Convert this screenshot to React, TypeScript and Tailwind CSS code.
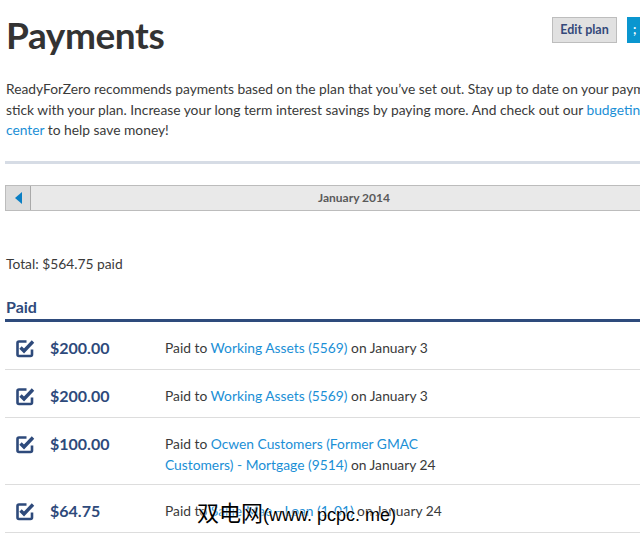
import React from 'react';

type Payment = {
  amount: string;
  parts: { text: string; link?: boolean }[];
};

const payments: Payment[] = [
  {
    amount: '$200.00',
    parts: [
      { text: 'Paid to ' },
      { text: 'Working Assets (5569)', link: true },
      { text: ' on January 3' },
    ],
  },
  {
    amount: '$200.00',
    parts: [
      { text: 'Paid to ' },
      { text: 'Working Assets (5569)', link: true },
      { text: ' on January 3' },
    ],
  },
  {
    amount: '$100.00',
    parts: [
      { text: 'Paid to ' },
      { text: 'Ocwen Customers (Former GMAC Customers) - Mortgage (9514)', link: true },
      { text: ' on January 24' },
    ],
  },
  {
    amount: '$64.75',
    parts: [
      { text: 'Paid to ' },
      { text: 'Sallie Mae - Loan (1-01)', link: true },
      { text: ' on January 24' },
    ],
  },
];

const CheckSquare = () => (
  <svg width="20" height="20" viewBox="0 0 20 20" className="shrink-0">
    {/* box outline, open at the top right where the tick leaves it */}
    <path
      d="M11.5 3.5 H4 Q2.5 3.5 2.5 5 V16.5 Q2.5 18 4 18 H15.5 Q17 18 17 16.5 V11.5"
      fill="none"
      stroke="#2e4a7b"
      strokeWidth="2.6"
    />
    <path d="M5.5 9.5 L9 13 L18 3.5" fill="none" stroke="#2e4a7b" strokeWidth="3.4" strokeLinejoin="miter" />
  </svg>
);

export default function App() {
  return (
    <div
      className="relative w-[640px] h-[540px] overflow-hidden bg-white text-[#3a3a3a]"
      style={{ fontFamily: 'Lato, "Noto Sans", sans-serif' }}
    >
      <div className="w-[700px] pl-[5px]">
        {/* Header */}
        <div className="flex items-start justify-between">
          <h1 className="mt-[16px] pl-[1px] text-[37px] leading-[38px] font-bold tracking-[-0.4px] text-[#333]">
            Payments
          </h1>
          <div className="flex gap-[10px] mt-[17px]">
            <button className="h-[26px] w-[65px] border border-[#bdbdbd] bg-[#e1e1e1] text-[12.5px] font-bold text-[#34497a]">
              Edit plan
            </button>
            <button className="h-[26px] w-[73px] bg-[#0a96cf] text-[12.5px] font-bold text-white text-left pl-[6px]">
              ; Pay
            </button>
          </div>
        </div>

        {/* Intro */}
        <p className="mt-[25px] pl-[1px] text-[13.8px] leading-[20.5px] whitespace-nowrap">
          ReadyForZero recommends payments based on the plan that you’ve set out. Stay up to date on your payments and
          <br />
          stick with your plan. Increase your long term interest savings by paying more. And check out our{' '}
          <a className="text-[#1b8fd6]">budgeting</a>
          <br />
          <a className="text-[#1b8fd6]">center</a> to help save money!
        </p>

        <div className="mt-[20px] h-[3px] bg-[#d6dce5]" />

        {/* Month navigator */}
        <div className="mt-[21px] flex h-[26px] border border-[#bcbcbc] bg-[#e9e9e9]">
          <button className="flex w-[25px] items-center justify-center border-r border-[#a9a9a9] bg-[#dcdcdc]">
            <svg width="7" height="12" viewBox="0 0 7 12">
              <path d="M7 0 L0 6 L7 12 Z" fill="#0a7fc4" />
            </svg>
          </button>
          <div className="flex flex-1 items-center justify-center text-[12px] font-bold text-[#5a5a5a] pr-[22px]">
            January 2014
          </div>
        </div>

        <div className="mt-[43px] pl-[1px] text-[13.8px] leading-[20px]">Total: $564.75 paid</div>

        {/* Paid list */}
        <h2 className="mt-[23px] pl-[1px] pb-[2px] text-[16px] leading-[20px] font-bold text-[#2e4a7b] border-b-[3px] border-[#2e4b7c]">
          Paid
        </h2>
        <ul>
          {payments.map((p, i) => (
            <li key={i} className="flex items-start border-b border-[#dddddd] pt-[14px] pb-[9px]">
              <div className="flex h-[24px] w-[160px] items-center pl-[10px]">
                <CheckSquare />
                <span className="ml-[15px] text-[16px] font-bold text-[#2e4a7b]">{p.amount}</span>
              </div>
              <div className="w-[290px] text-[13.8px] leading-[21px] pt-[1px]">
                {p.parts.map((part, j) =>
                  part.link ? (
                    <a key={j} className="text-[#1b8fd6]">
                      {part.text}
                    </a>
                  ) : (
                    <span key={j}>{part.text}</span>
                  )
                )}
              </div>
            </li>
          ))}
        </ul>
      </div>

      {/* Watermark */}
      <div
        className="absolute left-[197px] top-[497px] flex items-baseline leading-[28px] text-black whitespace-nowrap"
        style={{ textShadow: '0 0 2px #fff, 0 0 2px #fff' }}
      >
        <span className="text-[22px]" style={{ fontFamily: '"Noto Sans CJK SC", sans-serif' }}>
          双电网
        </span>
        <span className="text-[18px]" style={{ fontFamily: '"Liberation Sans", sans-serif' }}>
          (www. pcpc. me)
        </span>
      </div>
    </div>
  );
}
